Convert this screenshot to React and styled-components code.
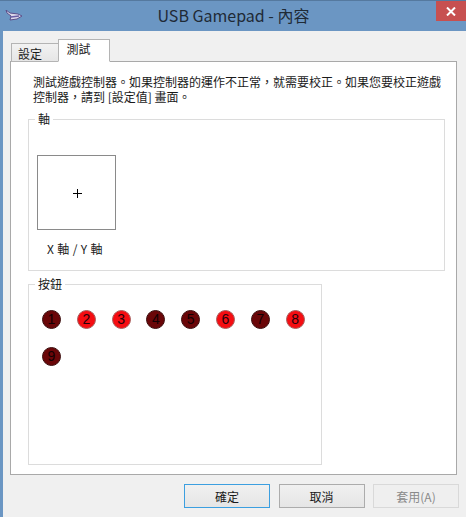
import React from "react";
import styled, { createGlobalStyle } from "styled-components";

const GlobalStyle = createGlobalStyle`
  html, body {
    margin: 0;
    padding: 0;
    background: #f0f0f0;
  }
  body {
    font-family: "Noto Sans CJK TC", "Liberation Sans", sans-serif;
    font-size: 12px;
    color: #1a1a1a;
  }
`;

const BUTTONS = [
  { n: 1, on: false },
  { n: 2, on: true },
  { n: 3, on: true },
  { n: 4, on: false },
  { n: 5, on: false },
  { n: 6, on: true },
  { n: 7, on: false },
  { n: 8, on: true },
  { n: 9, on: false },
];

const App = () => {
  return (
    <Window>
      <GlobalStyle />
      <TitleBar>
        <AppIcon viewBox="0 0 18 12">
          <path d="M1 0 L5 3 L13 4 L17 6 L12 9 L5 10 L6 6 L2 3 Z" fill="#dcd8ea" stroke="#5b4f8a" strokeWidth="1" />
          <path d="M6 7 L14 6" stroke="#6a5da6" strokeWidth="1.4" />
        </AppIcon>
        <Title>USB Gamepad - 內容</Title>
        <CloseButton>
          <svg width="10" height="9" viewBox="0 0 10 9">
            <path d="M1 0.5 L9 8.5 M9 0.5 L1 8.5" stroke="#fff" strokeWidth="2" />
          </svg>
        </CloseButton>
      </TitleBar>

      <Body>
        <Tabs>
          <Tab>設定</Tab>
          <Tab $active>測試</Tab>
        </Tabs>

        <Panel>
          <Intro>
            測試遊戲控制器。如果控制器的運作不正常，就需要校正。如果您要校正遊戲控制器，請到 [設定值] 畫面。
          </Intro>

          <AxisGroup>
            <GroupTitle>軸</GroupTitle>
            <AxisContent>
              <StickBox>
                <svg width="9" height="9" viewBox="0 0 9 9">
                  <path d="M4.5 0 V9 M0 4.5 H9" stroke="#000" strokeWidth="1" />
                </svg>
              </StickBox>
              <AxisLabel>X 軸 / Y 軸</AxisLabel>
            </AxisContent>
          </AxisGroup>

          <ButtonGroup>
            <GroupTitle>按鈕</GroupTitle>
            <LampGrid>
              {BUTTONS.map((b) => (
                <Lamp key={b.n} $on={b.on}>
                  {b.n}
                </Lamp>
              ))}
            </LampGrid>
          </ButtonGroup>
        </Panel>

        <Footer>
          <DialogButton $primary>確定</DialogButton>
          <DialogButton>取消</DialogButton>
          <DialogButton disabled>套用(A)</DialogButton>
        </Footer>
      </Body>
    </Window>
  );
};

export default App;

const Window = styled.div`
  width: 466px;
  height: 517px;
  overflow: hidden;
  display: flex;
  flex-direction: column;
  background: #6b96c3;
`;

const TitleBar = styled.div`
  height: 31px;
  flex: none;
  display: flex;
  align-items: flex-start;
  position: relative;
  background: #6b96c3;
  border-top: 1px solid #55799f;
  box-sizing: border-box;
`;

const AppIcon = styled.svg`
  width: 18px;
  height: 12px;
  margin: 9px 0 0 5px;
  flex: none;
`;

const Title = styled.div`
  flex: 1;
  text-align: center;
  font-size: 16px;
  line-height: 29px;
  color: #1f2a36;
  padding-right: 22px;
`;

const CloseButton = styled.div`
  position: absolute;
  top: 0;
  right: 0;
  width: 30px;
  height: 20px;
  background: #c75050;
  display: flex;
  align-items: center;
  justify-content: center;
`;

const Body = styled.div`
  flex: 1;
  margin-left: 3px;
  background: #f0f0f0;
  padding: 8px 7px 0 7px;
  display: flex;
  flex-direction: column;
  min-height: 0;
`;

const Tabs = styled.div`
  display: flex;
  align-items: flex-end;
  height: 23px;
  flex: none;
  position: relative;
  z-index: 1;
  margin-bottom: -1px;
  padding-left: 1px;
`;

const Tab = styled.div`
  box-sizing: border-box;
  width: ${(p) => (p.$active ? "52px" : "47px")};
  height: ${(p) => (p.$active ? "23px" : "19px")};
  border: 1px solid #b4b4b4;
  border-right-width: ${(p) => (p.$active ? "1px" : "0")};
  border-bottom-color: ${(p) => (p.$active ? "#fff" : "#b4b4b4")};
  background: ${(p) => (p.$active ? "#fff" : "linear-gradient(#f2f2f2, #e6e6e6)")};
  text-align: center;
  line-height: ${(p) => (p.$active ? "18px" : "20px")};
  padding-right: ${(p) => (p.$active ? "11px" : "10px")};
`;

const Panel = styled.div`
  box-sizing: border-box;
  width: 447px;
  height: 414px;
  flex: none;
  background: #fff;
  border: 1px solid #a9a9a9;
  padding: 12px 0 0 17px;
`;

const Intro = styled.p`
  margin: 0 0 0 5px;
  width: 412px;
  height: 45px;
  line-height: 15px;
  font-size: 12px;
`;

const GroupBox = styled.fieldset`
  box-sizing: border-box;
  margin: 0;
  border: 1px solid #dcdcdc;
  padding: 0;
`;

const GroupTitle = styled.legend`
  margin-left: 6px;
  padding: 0 3px;
  font-size: 12px;
  line-height: 14px;
`;

const AxisGroup = styled(GroupBox)`
  width: 417px;
  height: 159px;
  margin-bottom: 6px;
  margin-top: -7px;
`;

const AxisContent = styled.div`
  padding: 29px 0 0 8px;
`;

const StickBox = styled.div`
  box-sizing: border-box;
  width: 79px;
  height: 75px;
  padding: 2px 0 0 2px;
  border: 1px solid #8a8a8a;
  display: flex;
  align-items: center;
  justify-content: center;
`;

const AxisLabel = styled.div`
  margin: 10px 0 0 10px;
  line-height: 17px;
  font-size: 12px;
  letter-spacing: 0.35px;
`;

const ButtonGroup = styled(GroupBox)`
  width: 294px;
  height: 188px;
`;

const LampGrid = styled.div`
  display: grid;
  grid-template-columns: repeat(8, 19px);
  column-gap: 15.8px;
  row-gap: 18px;
  padding: 19px 0 0 13px;
`;

const Lamp = styled.div`
  width: 19px;
  height: 19px;
  box-sizing: border-box;
  border-radius: 50%;
  border: 1px solid ${(p) => (p.$on ? "#a8605f" : "#3c1010")};
  background: ${(p) => (p.$on ? "#f50d12" : "#6a0608")};
  color: ${(p) => (p.$on ? "#26020a" : "#120002")};
  font-family: "Liberation Sans", sans-serif;
  font-size: 14px;
  line-height: 17px;
  text-align: center;
`;

const Footer = styled.div`
  display: flex;
  gap: 8.5px;
  padding: 9px 0 0 174px;
`;

const DialogButton = styled.button`
  box-sizing: border-box;
  flex: none;
  width: 86px;
  height: 24px;
  padding: 0;
  font: inherit;
  font-size: 12px;
  color: ${(p) => (p.disabled ? "#8a8a8a" : "#1a1a1a")};
  border: 1px solid ${(p) => (p.disabled ? "#d9d9d9" : p.$primary ? "#3c9fe0" : "#acacac")};
  background: ${(p) => (p.disabled ? "#efefef" : "linear-gradient(#f0f0f0, #e5e5e5)")};
`;
